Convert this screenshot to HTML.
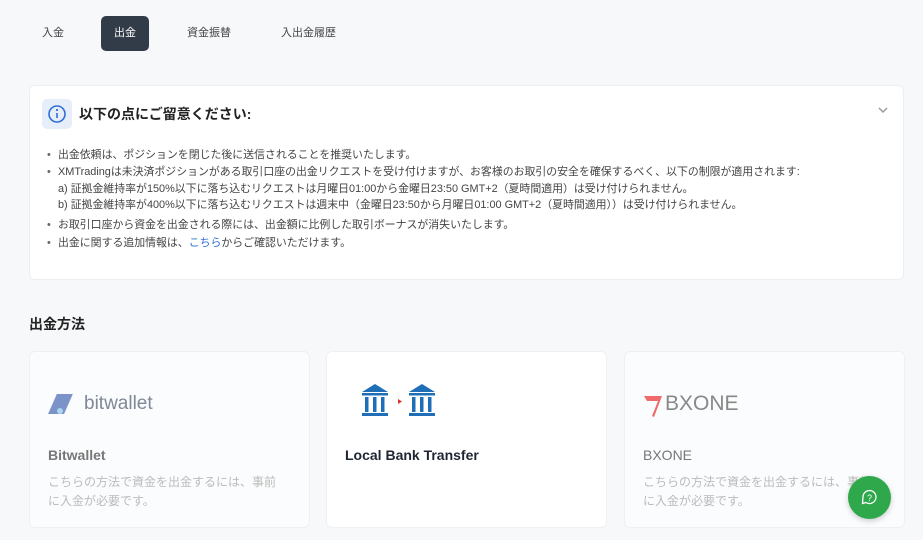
<!DOCTYPE html>
<html><head><meta charset="utf-8"><style>
*{margin:0;padding:0;box-sizing:border-box}
body{width:923px;height:540px;overflow:hidden;background:#f7f8f9;font-family:"Liberation Sans","Noto Sans CJK JP",sans-serif;color:#1f2633;position:relative}
.tab{position:absolute;top:16px;height:35px;line-height:35px;font-size:11px;color:#444}
.act{background:#323b48;color:#fff;border-radius:5px;width:48px;text-align:center}
.box{position:absolute;left:29px;top:85px;width:875px;height:195px;background:#fff;border:1px solid #eceef0;border-radius:6px}
.ic{position:absolute;left:12px;top:13px;width:30px;height:30px;background:#e6eefa;border-radius:5px}
.ttl{position:absolute;left:49px;top:18px;font-size:14px;font-weight:bold;color:#222}
ul{position:absolute;left:16px;top:60px;list-style:none;font-size:10.9px;color:#444;line-height:18px;white-space:nowrap}
li{padding-left:12px;position:relative}
li:before{content:"•";position:absolute;left:1px;color:#666}
li.s{line-height:16.5px;padding-bottom:2px}
h3{position:absolute;left:29px;top:314px;font-size:14px;font-weight:bold;color:#222}
.card{position:absolute;top:351px;width:281px;height:177px;background:#fff;border:1px solid #eef0f2;border-radius:6px}
.dim{background:#fbfcfd}
.cn{position:absolute;left:18px;top:95px;font-size:14px;font-weight:bold}
.cd{position:absolute;left:18px;top:121px;font-size:12px;color:#bbb;line-height:19px;width:236px}
</style></head><body>
<div class="tab" style="left:42px">入金</div>
<div class="tab act" style="left:101px">出金</div>
<div class="tab" style="left:187px">資金振替</div>
<div class="tab" style="left:281px">入出金履歴</div>
<div class="box">
<div class="ic"><svg width="30" height="30"><circle cx="15" cy="15" r="8" fill="none" stroke="#2f6fd6" stroke-width="1.6"/><circle cx="15" cy="11" r="1.1" fill="#2f6fd6"/><path d="M15 14v5" stroke="#2f6fd6" stroke-width="1.6"/></svg></div>
<div class="ttl">以下の点にご留意ください:</div>
<svg style="position:absolute;right:14px;top:18px" width="12" height="12"><path d="M2 4l4 4 4-4" fill="none" stroke="#999" stroke-width="1.5"/></svg>
<ul>
<li>出金依頼は、ポジションを閉じた後に送信されることを推奨いたします。</li>
<li class="s">XMTradingは未決済ポジションがある取引口座の出金リクエストを受け付けますが、お客様のお取引の安全を確保するべく、以下の制限が適用されます:<br>a) 証拠金維持率が150%以下に落ち込むリクエストは月曜日01:00から金曜日23:50 GMT+2（夏時間適用）は受け付けられません。<br>b) 証拠金維持率が400%以下に落ち込むリクエストは週末中（金曜日23:50から月曜日01:00 GMT+2（夏時間適用））は受け付けられません。</li>
<li>お取引口座から資金を出金される際には、出金額に比例した取引ボーナスが消失いたします。</li>
<li>出金に関する追加情報は、<span style="color:#2f6fd6">こちら</span>からご確認いただけます。</li>
</ul>
</div>
<h3>出金方法</h3>
<div class="card dim" style="left:29px">
<svg style="position:absolute;left:18px;top:40px" width="30" height="24"><path d="M9 2h16l-7 20H2z" fill="#7b93c9" transform="skewX(-5)"/><circle cx="12" cy="19" r="3" fill="#a9d6f0"/></svg>
<div style="position:absolute;left:54px;top:41px;font-size:19px;color:#7f8898">bitwallet</div>
<div class="cn" style="color:#777">Bitwallet</div>
<div class="cd">こちらの方法で資金を出金するには、事前に入金が必要です。</div>
</div>
<div class="card" style="left:326px">
<svg style="position:absolute;left:34px;top:29px" width="80" height="38"><g fill="#1f6fb8"><path d="M1 11L14 3 27 11z"/><rect x="1" y="12" width="26" height="2.5"/><rect x="4" y="16" width="3.5" height="15"/><rect x="12" y="16" width="3.5" height="15"/><rect x="20" y="16" width="3.5" height="15"/><rect x="1" y="32" width="26" height="3"/></g><path d="M37 18l4 2.5-4 2.5z" fill="#d33"/><g fill="#1f6fb8" transform="translate(47,0)"><path d="M1 11L14 3 27 11z"/><rect x="1" y="12" width="26" height="2.5"/><rect x="4" y="16" width="3.5" height="15"/><rect x="12" y="16" width="3.5" height="15"/><rect x="20" y="16" width="3.5" height="15"/><rect x="1" y="32" width="26" height="3"/></g></svg>
<div class="cn" style="color:#1f2633">Local Bank Transfer</div>
</div>
<div class="card dim" style="left:624px">
<svg style="position:absolute;left:18px;top:40px" width="22" height="26"><path d="M1 4h18l-8 21-2-1 6-15H4z" fill="#ef6b6b"/></svg>
<div style="position:absolute;left:40px;top:40px;font-size:21px;color:#888;letter-spacing:0px">BXONE</div>
<div class="cn" style="color:#777;font-weight:normal">BXONE</div>
<div class="cd">こちらの方法で資金を出金するには、事前に入金が必要です。</div>
</div>
<div style="position:absolute;left:848px;top:476px;width:43px;height:43px;border-radius:50%;background:#2ea84a;box-shadow:0 2px 6px rgba(0,0,0,.2)">
<svg width="43" height="43"><path d="M15 21a6.5 6.5 0 1 1 3 5.5l-3.5 1z" fill="none" stroke="#fff" stroke-width="1.3"/><text x="21.5" y="25" font-size="9" fill="#fff" text-anchor="middle" font-family="Liberation Sans">?</text></svg>
</div>
</body></html>
